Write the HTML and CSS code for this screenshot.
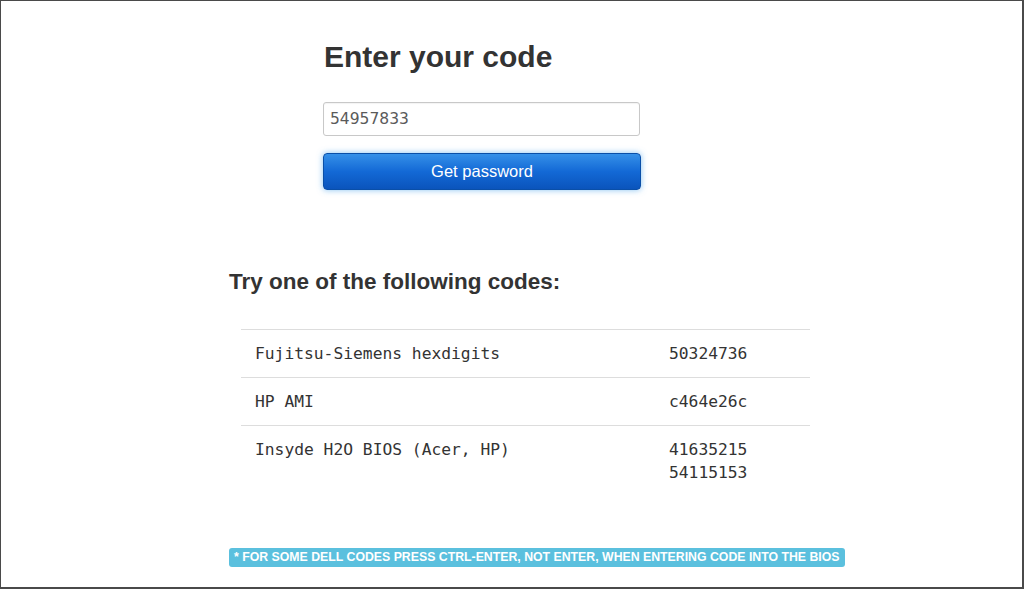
FILE: index.html
```html
<!DOCTYPE html>
<html lang="en">
<head>
<meta charset="utf-8">
<title>Enter your code</title>
<link rel="stylesheet" href="styles.css">
</head>
<body>
<div class="frame">
  <div class="content">
    <form class="code-form" onsubmit="return false">
      <h1 class="title">Enter your code</h1>
      <input class="code-input" type="text" value="54957833">
      <button class="btn" type="submit">Get password</button>
    </form>
    <h2 class="subtitle">Try one of the following codes:</h2>
    <table class="codes">
      <tr><td class="vendor">Fujitsu-Siemens hexdigits</td><td class="code">50324736</td></tr>
      <tr><td class="vendor">HP AMI</td><td class="code">c464e26c</td></tr>
      <tr><td class="vendor">Insyde H2O BIOS (Acer, HP)</td><td class="code">41635215<br>54115153</td></tr>
    </table>
    <p class="note"><span class="label">* For some Dell codes press Ctrl-Enter, not Enter, when entering code into the BIOS</span></p>
  </div>
</div>
</body>
</html>
```
FILE: styles.css
```css
html, body {
  margin: 0;
  padding: 0;
  background: #fff;
}
body {
  font-family: "Liberation Sans", Arial, sans-serif;
  color: #333;
}
.frame {
  width: 1024px;
  height: 589px;
  box-sizing: border-box;
  border: 1px solid #4a4a4a;
  border-right-width: 2px;
  border-bottom-width: 2px;
  overflow: hidden;
}
.content {
  margin-left: 227px;
  width: 620px;
}
.code-form {
  margin: 0 0 0 95px;
  padding-top: 39px;
  width: 318px;
  display: flex;
  flex-direction: column;
}
.title {
  margin: 0 0 0 1px;
  font-size: 30px;
  line-height: 34px;
  font-weight: bold;
  color: #333;
}
.code-input {
  margin-top: 28px;
  margin-right: 1px;
  height: 34px;
  box-sizing: border-box;
  border: 1px solid #c8c8c8;
  border-radius: 3px;
  padding: 0 6px;
  font-family: "DejaVu Sans", sans-serif;
  font-size: 15.5px;
  color: #5a5a5a;
  background: #fff;
  box-shadow: inset 0 1px 1px rgba(0,0,0,0.05);
}
.btn {
  margin-top: 17px;
  height: 37px;
  border: 1px solid #0a4fa8;
  border-radius: 4px;
  background: linear-gradient(#3590e8, #1369d6 50%, #0a54bc);
  box-shadow: 0 0 6px rgba(82, 168, 236, 0.7);
  color: #fff;
  font-family: "Liberation Sans", Arial, sans-serif;
  font-size: 16.5px;
  padding: 0;
}
.subtitle {
  margin: 79px 0 0 1px;
  font-size: 22.5px;
  line-height: 26px;
  font-weight: bold;
  color: #333;
}
.codes {
  margin: 34px 0 0 13px;
  width: 569px;
  border-collapse: collapse;
  font-family: "DejaVu Sans Mono", monospace;
  font-size: 16.3px;
  line-height: 23px;
  color: #333;
}
.codes td {
  border-top: 1px solid #ddd;
  padding: 12px 0 12px 14px;
  vertical-align: top;
}
.codes .vendor {
  width: 414px;
}
.codes .code {
  padding-left: 0;
}
.note {
  margin: 50px 0 0 1px;
  line-height: 19px;
}
.label {
  display: inline-block;
  background: #5bc0de;
  color: #fff;
  font-weight: bold;
  font-size: 12.3px;
  text-transform: uppercase;
  padding: 0 5px;
  border-radius: 3px;
  line-height: 19px;
}
```
